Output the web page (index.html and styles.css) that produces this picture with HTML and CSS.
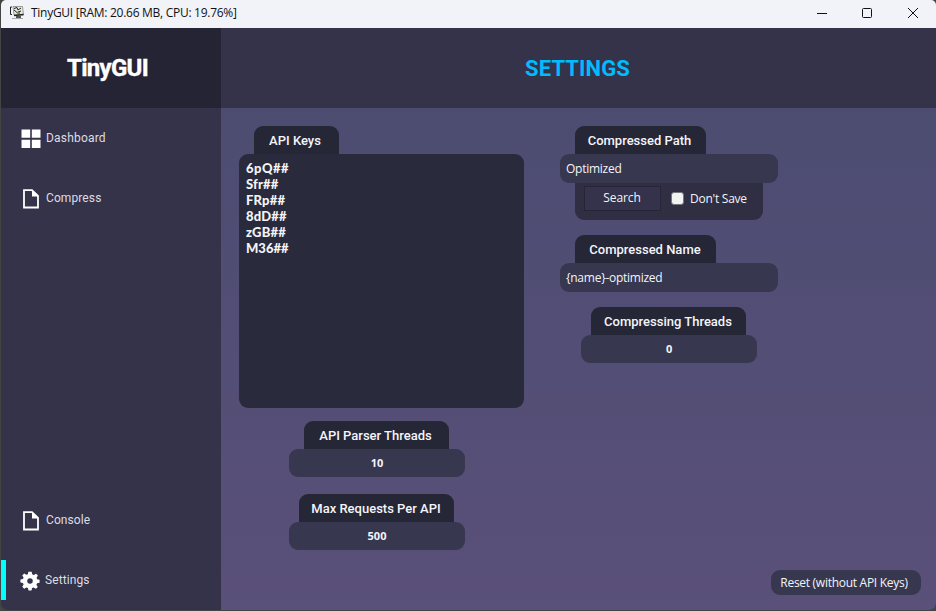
FILE: index.html
```html
<!DOCTYPE html>
<html lang="en">
<head>
<meta charset="utf-8">
<title>TinyGUI</title>
<link rel="stylesheet" href="styles.css">
</head>
<body>
<div class="window">
  <header class="titlebar">
    <svg class="app-icon" width="16" height="16" viewBox="0 0 16 16"><path d="M3 2H1.500V9.500H3" fill="none" stroke="#222"/><path d="M4 1.500H13.500L14.500 10H5Z" fill="#e4e9e1" stroke="#777" stroke-width=".7"/><path d="M5 3.500L8 2.500L9 5L12 3M5 5L8 7.500L12 6" stroke="#222" stroke-width="1" fill="none"/><path d="M8 7h3v2H8z" fill="#7c913e"/><path d="M5 10.500L14.500 9.500M7 12H12" stroke="#222" stroke-width="1.400"/><path d="M3 13.500H14" stroke="#aaa"/></svg>
    <span class="caption">TinyGUI [RAM: 20.66 MB, CPU: 19.76%]</span>
    <svg class="controls" width="102" height="12" viewBox="0 0 102 12" fill="none" stroke="#111"><path d="M1 6.5H11"/><rect x="46.5" y="1.5" width="9" height="9" rx="1"/><path d="M92 1L102 11M102 1L92 11"/></svg>
  </header>
  <div class="body">
    <aside class="sidebar">
      <div class="logo"><span>TinyGUI</span></div>
      <nav class="nav">
        <a class="item"><svg width="20" height="20" viewBox="0 0 20 20" fill="#fff"><path d="M.5.5h8.700v8.200H.5zM10.800.5h8.700v8.200h-8.700zM.5 10.700h8.700V19H.5zM10.800 10.700h8.700V19h-8.700z"/></svg><span class="t-dashboard">Dashboard</span></a>
        <a class="item"><svg width="20" height="20" viewBox="0 0 20 20"><path d="M3 1.200H11L17 7V18.500H3Z" fill="none" stroke="#fff" stroke-width="1.800"/><path d="M11 1L17.500 7.500H11Z" fill="#fff"/></svg><span class="t-compress">Compress</span></a>
        <a class="item push"><svg width="20" height="20" viewBox="0 0 20 20"><path d="M3 1.200H11L17 7V18.500H3Z" fill="none" stroke="#fff" stroke-width="1.800"/><path d="M11 1L17.500 7.500H11Z" fill="#fff"/></svg><span class="t-console">Console</span></a>
        <a class="item active"><svg width="20" height="20" viewBox="0 0 24 24" fill="#fff"><path d="M10 1h4l.6 3 2 .9L19.300 3.200 21.500 5.500 19.900 8.100 20.500 10 23.500 10.500V14L20.500 14.600 19.700 16.500 21.300 19.200 19 21.300 16.300 19.700 14.500 20.500 13.800 23.500H10.200L9.500 20.500 7.700 19.700 5 21.300 2.700 19 4.300 16.300 3.500 14.500.5 13.800V10.300L3.500 9.700 4.300 7.800 2.700 5.300 5 3 7.700 4.500 9.400 3.900ZM12 8.700a3.300 3.300 0 1 0 0 6.600a3.300 3.300 0 1 0 0-6.600Z" fill-rule="evenodd"/></svg><span class="t-settings">Settings</span></a>
      </nav>
    </aside>
    <main class="main">
      <div class="page-head"><h1>SETTINGS</h1></div>
      <div class="content">
        <section class="column left">
          <div class="field keys"><label class="tab"><span>API Keys</span></label><div class="area"><div class="wide">6pQ##</div><div>Sfr##</div><div>FRp##</div><div>8dD##</div><div>zGB##</div><div class="tight">M36##</div></div></div>
          <div class="field number parser"><label class="tab"><span>API Parser Threads</span></label><div class="box">10</div></div>
          <div class="field number requests"><label class="tab"><span>Max Requests Per API</span></label><div class="box">500</div></div>
        </section>
        <section class="column right">
          <div class="field path"><label class="tab"><span>Compressed Path</span></label><div class="box"><span>Optimized</span></div>
            <div class="options"><button class="search"><span>Search</span></button><i class="check"></i><span>Don't Save</span></div></div>
          <div class="field name"><label class="tab"><span>Compressed Name</span></label><div class="box"><span>{name}-optimized</span></div></div>
          <div class="field number threads"><label class="tab"><span>Compressing Threads</span></label><div class="box">0</div></div>
        </section>
        <button class="reset"><span>Reset (without API Keys)</span></button>
      </div>
    </main>
  </div>
</div>
</body>
</html>
```
FILE: styles.css
```css
* { box-sizing: border-box; }
body { margin: 0; background: #444444; overflow: hidden; }
.window {
  width: 935px; height: 610px; margin-left: 1px;
  display: flex; flex-direction: column;
  border-radius: 5px 5px 7px 7px; overflow: hidden;
  background: #34334a; color: #f3f4f8;
  font-family: "Open Sans", sans-serif; font-size: 12px;
}
.titlebar { height: 28px; flex: none; display: flex; align-items: center; background: #f1f3f9; color: #111; padding: 0 18px 3px 8px; }
.caption { margin-left: 6px; white-space: nowrap; letter-spacing: -0.28px; }
.controls { margin-left: auto; }
.body { flex: 1; display: flex; min-height: 0; }
.sidebar { width: 220px; flex: none; display: flex; flex-direction: column; }
.logo { height: 80px; background: #252435; display: flex; align-items: center; padding-left: 66px; color: #fff; font: bold 24px Roboto, sans-serif; letter-spacing: -0.7px; -webkit-text-stroke: 0.4px #fff; }
.nav { flex: 1; display: flex; flex-direction: column; font: 12px Roboto, sans-serif; color: #dddde3; }
.item { height: 60px; display: flex; align-items: center; padding-left: 20px; gap: 5px; }
.item svg { margin-top: 2px; }
.t-dashboard { letter-spacing: 0.2px; }
.t-compress, .t-console, .t-settings { letter-spacing: 0.1px; }
.push { margin-top: auto; }
.active { height: 40px; margin: 10px 0; border-left: 5px solid #00ffff; padding-left: 14px; }
.main { flex: 1; display: flex; flex-direction: column; background: linear-gradient(#4c4c71 80px, #5a5079); }
.page-head { height: 80px; background: #34334a; display: flex; align-items: center; justify-content: center; padding-right: 1px; }
h1 { margin: 1px 0 0; font: bold 22px Roboto, sans-serif; letter-spacing: 0.1px; color: #00bbff; position: relative; left: -0.5px; }
.content { flex: 1; display: flex; padding: 18px 15px 15px 18px; }
.column { display: flex; flex-direction: column; flex: none; }
.left { width: 285px; margin-right: 36px; align-items: center; }
.right { width: 218px; margin-right: -20px; letter-spacing: -0.25px; }
.field { display: flex; flex-direction: column; }
.tab { height: 28px; margin-left: 15px; display: flex; align-items: center; justify-content: center; padding-right: 1px; border-radius: 9px 9px 0 0; background: #252636; color: #f4f5fa; font: 500 13px Roboto, sans-serif; letter-spacing: 0; white-space: nowrap; }
.box { height: 29px; border-radius: 9px; background: #373750; padding: 0 0 1px 6px; display: flex; align-items: center; }
.keys { width: 285px; margin-bottom: 13px; }
.keys .tab { width: 85px; padding-right: 3px; }
.area { height: 254px; background: #2a2a3d; border-radius: 9px; padding: 6px 7px; font: 900 13px/16px Lato, sans-serif; }
.area div { letter-spacing: 0.2px; }
.area .wide { letter-spacing: 0.5px; }
.area .tight { letter-spacing: 0; }
.number { width: 176px; }
.number .box { height: 28px; padding: 0 0 1px; justify-content: center; font-weight: 700; font-size: 11px; }
.parser { margin: 0 0 17px -9px; }
.parser .tab { width: 145px; padding-right: 2px; }
.requests { margin-left: -9px; }
.requests .tab { width: 155px; margin-left: 10px; }
.path { margin-bottom: 15px; }
.path .tab { width: 131px; padding-right: 2px; }
.options { width: 188px; height: 37px; margin-left: 15px; padding: 3px 9px 9px; background: #2f2e43; border-radius: 0 0 9px 9px; display: flex; align-items: center; }
.search { width: 77px; height: 25px; border: 1px solid #252537; background: #34334b; color: inherit; font: inherit; letter-spacing: -0.1px; padding: 0 1px 2px 0; }
.check { width: 13px; height: 13px; margin: 0 6px 0 10px; border: 1px solid #777; border-radius: 3px; background: #f3f3f3; }
.name { margin-bottom: 15px; }
.name .tab { width: 141px; }
.threads { margin-left: 21px; }
.threads .tab { width: 155px; margin-left: 10px; }
.reset { margin: auto 0 0 auto; flex: none; width: 150px; height: 25px; border: 0; border-radius: 9px; background: #373750; color: inherit; font: inherit; letter-spacing: -0.28px; padding: 0 4px 0 0; white-space: nowrap; }
```
